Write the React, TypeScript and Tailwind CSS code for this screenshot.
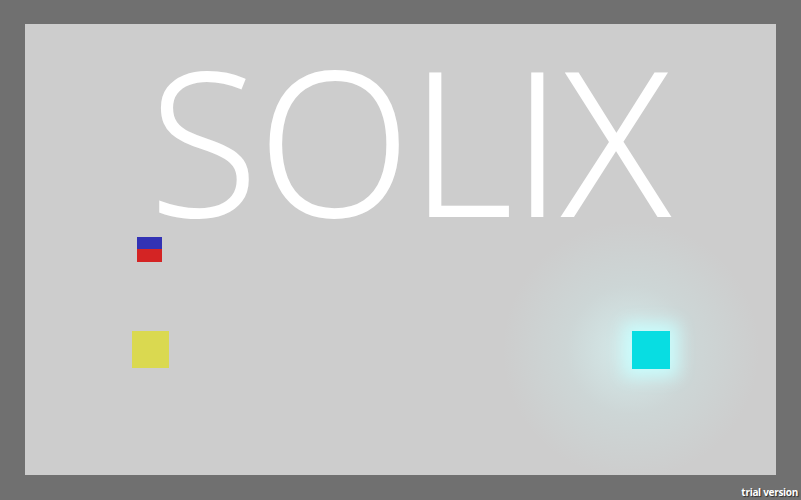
export default function App() {
  return (
    <div className="relative flex h-[500px] w-[801px] flex-col bg-[#707070] pl-[25px] pt-[24px] font-['Open_Sans',sans-serif]">
      <div className="relative h-[451px] w-[751px] overflow-hidden bg-[#cdcdcd]">
        {/* faint glow around the cyan block */}
        <div className="absolute left-[476px] top-[196px] h-[260px] w-[260px] rounded-full bg-[radial-gradient(circle,rgba(215,245,245,0.75)_0%,rgba(205,225,225,0.45)_35%,rgba(205,205,205,0)_70%)]" />
        <div className="absolute left-0 right-0 top-[6px] whitespace-nowrap pl-[18px] text-center text-[199px] font-light leading-[1.1] text-white [-webkit-text-stroke:2px_white]">
          SOLIX
        </div>
        <div className="absolute left-[112px] top-[213px] flex h-[25px] w-[25px] flex-col">
          <div className="h-[12px] bg-[#3232b4]" />
          <div className="h-[13px] bg-[#d42424]" />
        </div>
        <div className="absolute left-[107px] top-[307px] h-[37px] w-[37px] bg-[#dad950]" />
        <div className="absolute left-[607px] top-[307px] h-[38px] w-[38px] bg-[#08dde2] shadow-[0_0_16px_8px_rgba(200,255,255,0.9)]" />
      </div>
      <div className="absolute bottom-[3px] right-[3px] text-[10px] font-bold leading-none tracking-[-0.3px] text-white [text-shadow:1px_1px_1px_rgba(0,0,0,0.6)]">
        trial version
      </div>
    </div>
  );
}
